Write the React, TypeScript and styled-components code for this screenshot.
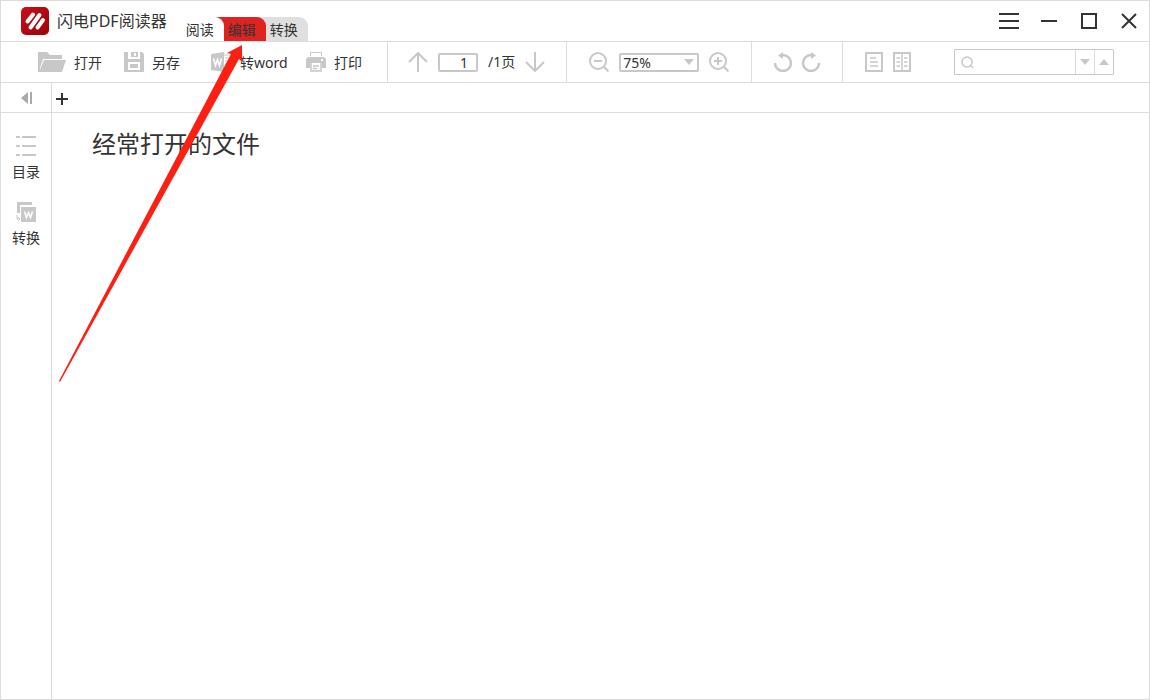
import React from "react";
import styled, { createGlobalStyle } from "styled-components";

const Global = createGlobalStyle`
  *, *::before, *::after { box-sizing: border-box; }
  body { margin: 0; background: #fff; }
  body, button, input, select {
    font-family: "Noto Sans", "Noto Sans CJK SC", sans-serif;
    font-size: 14px;
    color: #333;
  }
  button { border: 0; padding: 0; background: none; cursor: pointer; }
  svg { display: block; flex: none; }
`;

const LINE = "#dcdcdc";
const ICON = "#c8c8c8";

const Window = styled.div`
  position: relative;
  display: flex;
  flex-direction: column;
  min-height: 100vh;
  border: 1px solid ${LINE};
`;

const TitleBar = styled.header`
  display: flex;
  height: 41px;
  padding-left: 20px;
  border-bottom: 1px solid ${LINE};
`;

const Brand = styled.div`
  display: flex;
  align-items: center;
  gap: 8px;
`;

const AppName = styled.h1`
  margin: 0;
  font-size: 16px;
  font-weight: 400;
  line-height: 24px;
`;

const ModeTabs = styled.nav`
  display: flex;
  align-items: flex-end;
  margin-left: 7px;
`;

const ModeTab = styled.button<{ $fill: string; $layer: number }>`
  position: relative;
  z-index: ${(p) => p.$layer};
  width: 50px;
  height: 24px;
  margin-right: -8px;
  padding-left: 2px;
  line-height: 26px;
  border-top-right-radius: 9px;
  background: ${(p) => p.$fill};
`;

const WindowButtons = styled.div`
  display: flex;
  align-items: center;
  margin-left: auto;
`;

const WindowButton = styled.button`
  display: grid;
  place-items: center;
  width: 40px;
  height: 40px;
`;

const Toolbar = styled.div`
  display: flex;
  height: 41px;
  border-bottom: 1px solid ${LINE};
`;

const Group = styled.div<{ $gap: number; $left: number; $right: number }>`
  display: flex;
  align-items: center;
  gap: ${(p) => p.$gap}px;
  padding: 0 ${(p) => p.$right}px 0 ${(p) => p.$left}px;
  border-right: 1px solid ${LINE};

  &:last-of-type { border-right: 0; }
`;

const Tool = styled.button<{ $width?: number }>`
  display: flex;
  align-items: center;
  gap: 8px;
  min-width: ${(p) => (p.$width ? `${p.$width}px` : "auto")};
  line-height: 24px;
  white-space: nowrap;
`;

const Label = styled.span`
  padding-top: 2px;
`;

const PageInput = styled.input`
  width: 40px;
  height: 19px;
  padding: 0 8px;
  border: 2px solid ${ICON};
  border-radius: 2px;
  text-align: right;
  outline: 0;
`;

const PageBox = styled.label`
  display: flex;
  align-items: center;
  gap: 10px;
  line-height: 24px;
`;

const SelectBox = styled.div`
  display: grid;
  align-items: center;
  width: 80px;
  height: 19px;
  border: 2px solid ${ICON};
  border-radius: 2px;

  > * { grid-area: 1 / 1; }
  > svg { justify-self: end; margin-right: 3px; pointer-events: none; }
`;

const ZoomSelect = styled.select`
  appearance: none;
  width: 100%;
  height: 15px;
  padding: 0 2px;
  border: 0;
  background: none;
  line-height: 15px;
  outline: 0;
`;

const SearchBox = styled.form`
  display: flex;
  align-self: center;
  align-items: center;
  width: 160px;
  height: 26px;
  margin: 0 35px 0 auto;
  padding-left: 6px;
  border: 1px solid ${ICON};
  border-radius: 1px;
`;

const SearchInput = styled.input`
  flex: 1;
  min-width: 0;
  height: 24px;
  border: 0;
  background: none;
  outline: 0;
`;

const SearchStep = styled.button`
  display: grid;
  place-items: center;
  width: 19px;
  height: 24px;
  border-left: 1px solid ${LINE};
`;

const TabStrip = styled.div`
  display: flex;
  height: 30px;
  border-bottom: 1px solid ${LINE};
`;

const Collapse = styled.button`
  display: grid;
  place-items: center;
  width: 51px;
  border-right: 1px solid ${LINE};
`;

const AddTab = styled.button`
  display: grid;
  place-items: center;
  width: 20px;
  padding-top: 3px;
`;

const Body = styled.div`
  display: flex;
  flex: 1;
`;

const Sidebar = styled.aside`
  display: flex;
  flex-direction: column;
  align-items: center;
  gap: 18px;
  width: 51px;
  padding-top: 22px;
  border-right: 1px solid ${LINE};
`;

const SideItem = styled.button`
  display: flex;
  flex-direction: column;
  align-items: center;
  gap: 4px;
  line-height: 22px;
`;

const Content = styled.main`
  flex: 1;
  padding: 13px 40px;
`;

const Heading = styled.h2`
  margin: 0;
  font-size: 24px;
  font-weight: 400;
  line-height: 36px;
`;

const Pointer = styled.svg`
  position: absolute;
  z-index: 5;
  left: 57px;
  top: 43px;
  pointer-events: none;
`;

const Logo = () => (
  <svg width="28" height="28" viewBox="0 0 28 28">
    <defs>
      <linearGradient id="logo" x1="0" y1="0" x2="1" y2="1">
        <stop offset="0" stopColor="#cb0f19" />
        <stop offset="1" stopColor="#9c0208" />
      </linearGradient>
    </defs>
    <rect width="28" height="28" rx="5" fill="url(#logo)" />
    <g stroke="#fff" strokeWidth="4" strokeLinecap="round" fill="none">
      <path d="M6.500 14.500L12 7.500" />
      <path d="M9.500 20.500L18.500 8" />
      <path d="M16.500 20.500L22 13" />
    </g>
  </svg>
);

const FolderIcon = () => (
  <svg width="28" height="22" viewBox="0 0 28 22" fill={ICON}>
    <path d="M0 1h9l3 3h12v4H5L2 17V21H0z" />
    <path d="M6 9h22l-4 12H1z" />
  </svg>
);

const SaveIcon = () => (
  <svg width="20" height="20" viewBox="0 0 20 20">
    <path fill={ICON} fillRule="evenodd" d="M0 0h4v7h12V0h2l2 2v18H0zM4 10v8h12v-8z" />
    <path fill={ICON} d="M7 0h7v5H7zM6 12h8v4H6z" />
    <path fill="#fff" d="M10 1h2v3h-2z" />
  </svg>
);

const WordIcon = () => (
  <svg width="21" height="20" viewBox="0 0 21 20">
    <path fill={ICON} d="M0 2l13-2v20L0 18z" />
    <path d="M13 3h7v14h-7M14 6h4M14 9h4M14 12h4" fill="none" stroke={ICON} />
    <path d="M2.500 6.500l2 7 2-6 2 6 2-7" fill="none" stroke="#fff" strokeWidth="1.500" />
  </svg>
);

const PrintIcon = () => (
  <svg width="20" height="20" viewBox="0 0 20 20">
    <path d="M4.500 4V.5h11V4" fill="none" stroke={ICON} />
    <path fill={ICON} fillRule="evenodd" d="M2 5h16l2 2v9h-4v-5H4v5H0V7zM15 7v2h2V7z" />
    <path d="M5 11v8h10v-8M7 14h6M7 16.500h4" fill="none" stroke={ICON} strokeWidth="1.500" />
  </svg>
);

const ArrowIcon = ({ down = false }: { down?: boolean }) => (
  <svg width="20" height="20" viewBox="0 0 20 20" fill="none" stroke={ICON} strokeWidth="2">
    {down ? <path d="M10 0v18M1 10l9 9 9-9" /> : <path d="M10 20V2M1 10l9-9 9 9" />}
  </svg>
);

const ZoomIcon = ({ plus = false }: { plus?: boolean }) => (
  <svg width="20" height="20" viewBox="0 0 20 20" fill="none" stroke={ICON} strokeWidth="2">
    <circle cx="9" cy="9" r="8" />
    <path d="M15 15l4.500 4.500M5 9h8" />
    {plus && <path d="M9 5v8" />}
  </svg>
);

const RotateLeft = () => (
  <svg width="20" height="20" viewBox="0 0 20 20">
    <path d="M2 11a8 8 0 0 0 16 0a8 8 0 0 0-8-8H8" fill="none" stroke={ICON} strokeWidth="2.500" />
    <path d="M5 3.500L10 0v7z" fill={ICON} />
  </svg>
);

const RotateRight = () => (
  <svg width="20" height="20" viewBox="0 0 20 20">
    <path d="M18 11a8 8 0 0 1-16 0a8 8 0 0 1 8-8h2" fill="none" stroke={ICON} strokeWidth="2.500" />
    <path d="M15 3.500L10 0v7z" fill={ICON} />
  </svg>
);

const SinglePage = () => (
  <svg width="18" height="20" viewBox="0 0 18 20" fill="none" stroke={ICON} strokeWidth="2">
    <rect x="1" y="1" width="16" height="18" />
    <path d="M5 6h6M5 10h8M5 14h8" strokeWidth="1.500" />
  </svg>
);

const DoublePage = () => (
  <svg width="18" height="20" viewBox="0 0 18 20" fill="none" stroke={ICON} strokeWidth="2">
    <rect x="1" y="1" width="16" height="18" />
    <path d="M9 1v18M3.500 6H7M3.500 10H7M3.500 14H7M11 6h3.500M11 10h3.500M11 14h3.500" strokeWidth="1.500" />
  </svg>
);

const Triangle = ({ up = false }: { up?: boolean }) => (
  <svg width="10" height="6" viewBox="0 0 10 6" fill={ICON}>
    <path d={up ? "M0 6h10L5 0z" : "M0 0h10L5 6z"} />
  </svg>
);

const stroke = { fill: "none", stroke: "#333", strokeWidth: 2 };

export default function App() {
  return (
    <>
      <Global />
      <Window>
        <TitleBar>
          <Brand>
            <Logo />
            <AppName>闪电PDF阅读器</AppName>
          </Brand>
          <ModeTabs>
            <ModeTab $fill="#fff" $layer={3}>阅读</ModeTab>
            <ModeTab $fill="#de2421" $layer={2}>编辑</ModeTab>
            <ModeTab $fill="#dfdfdf" $layer={1}>转换</ModeTab>
          </ModeTabs>
          <WindowButtons>
            <WindowButton aria-label="菜单">
              <svg width="20" height="16" {...stroke}><path d="M0 1h20M0 8h20M0 15h20" /></svg>
            </WindowButton>
            <WindowButton aria-label="最小化">
              <svg width="16" height="2" {...stroke}><path d="M0 1h16" /></svg>
            </WindowButton>
            <WindowButton aria-label="最大化">
              <svg width="16" height="16" {...stroke}><rect x="1" y="1" width="14" height="14" /></svg>
            </WindowButton>
            <WindowButton aria-label="关闭">
              <svg width="16" height="16" {...stroke}><path d="M1 1l14 14M15 1L1 15" /></svg>
            </WindowButton>
          </WindowButtons>
        </TitleBar>

        <Toolbar>
          <Group $gap={0} $left={37} $right={24}>
            <Tool $width={86}><FolderIcon /><Label>打开</Label></Tool>
            <Tool $width={87}><SaveIcon /><Label>另存</Label></Tool>
            <Tool $width={95}><WordIcon /><Label>转word</Label></Tool>
            <Tool $width={57}><PrintIcon /><Label>打印</Label></Tool>
          </Group>
          <Group $gap={10} $left={20} $right={21}>
            <Tool aria-label="上一页"><ArrowIcon /></Tool>
            <PageBox>
              <PageInput aria-label="页码" defaultValue="1" />
              /1页
            </PageBox>
            <Tool aria-label="下一页"><ArrowIcon down /></Tool>
          </Group>
          <Group $gap={10} $left={22} $right={22}>
            <Tool aria-label="缩小"><ZoomIcon /></Tool>
            <SelectBox>
              <ZoomSelect aria-label="缩放比例" defaultValue="75%">
                <option>75%</option>
              </ZoomSelect>
              <Triangle />
            </SelectBox>
            <Tool aria-label="放大"><ZoomIcon plus /></Tool>
          </Group>
          <Group $gap={8} $left={21} $right={21}>
            <Tool aria-label="向左旋转"><RotateLeft /></Tool>
            <Tool aria-label="向右旋转"><RotateRight /></Tool>
          </Group>
          <Group $gap={10} $left={22} $right={22}>
            <Tool aria-label="单页"><SinglePage /></Tool>
            <Tool aria-label="双页"><DoublePage /></Tool>
          </Group>
          <SearchBox>
            <svg width="13" height="13" fill="none" stroke={ICON} strokeWidth="1.500">
              <circle cx="6" cy="6" r="5" /><path d="M9.500 9.500L12 12" />
            </svg>
            <SearchInput aria-label="搜索" type="text" />
            <SearchStep type="button" aria-label="下一个"><Triangle /></SearchStep>
            <SearchStep type="button" aria-label="上一个"><Triangle up /></SearchStep>
          </SearchBox>
        </Toolbar>

        <TabStrip>
          <Collapse aria-label="收起">
            <svg width="11" height="12" fill="#aaa"><path d="M0 6l7-6v12zM9 0h2v12H9z" /></svg>
          </Collapse>
          <AddTab aria-label="新标签">
            <svg width="12" height="12" {...stroke}><path d="M6 0v12M0 6h12" /></svg>
          </AddTab>
        </TabStrip>

        <Body>
          <Sidebar>
            <SideItem>
              <svg width="20" height="22" stroke={ICON} strokeWidth="2">
                <path d="M0 2h4M6 2h14M0 11h4M6 11h14M0 20h4M6 20h14" />
              </svg>
              目录
            </SideItem>
            <SideItem>
              <svg width="20" height="22" viewBox="0 0 20 22">
                <path d="M2.500 12V2.500H16" fill="none" stroke={ICON} strokeWidth="3" />
                <path d="M5 6h15v15H5z" fill={ICON} />
                <path d="M8.500 10.500l2 6 2-5 2 5 2-6" fill="none" stroke="#fff" strokeWidth="1.500" />
                <path d="M1 14v4h3M2 16l2 2-2 2" fill="none" stroke={ICON} />
              </svg>
              转换
            </SideItem>
          </Sidebar>
          <Content>
            <Heading>经常打开的文件</Heading>
          </Content>
        </Body>

        <Pointer width="190" height="342" viewBox="58 44 190 342" fill="#fc1f12">
          <path d="M242 45L227 53L231 54L59 381L60 382L239 59L242 62z" />
        </Pointer>
      </Window>
    </>
  );
}
